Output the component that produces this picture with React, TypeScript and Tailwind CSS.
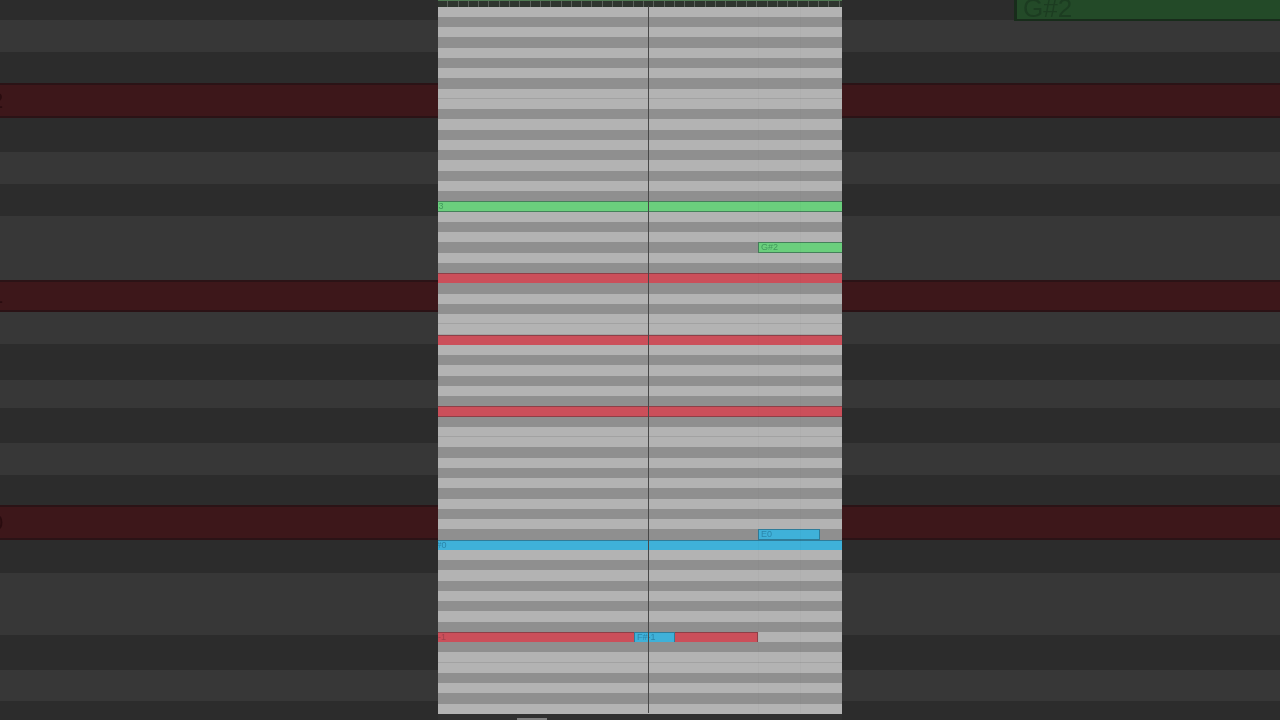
type Band = { h: number; kind: 'dark' | 'light' | 'red'; label?: string };

const bands: Band[] = [
  { h: 20, kind: 'dark' },
  { h: 32, kind: 'light' },
  { h: 31, kind: 'dark' },
  { h: 35, kind: 'red', label: '2' },
  { h: 34, kind: 'dark' },
  { h: 32, kind: 'light' },
  { h: 32, kind: 'dark' },
  { h: 32, kind: 'light' },
  { h: 32, kind: 'light' },
  { h: 32, kind: 'red', label: '1' },
  { h: 32, kind: 'light' },
  { h: 36, kind: 'dark' },
  { h: 28, kind: 'light' },
  { h: 35, kind: 'dark' },
  { h: 32, kind: 'light' },
  { h: 30, kind: 'dark' },
  { h: 35, kind: 'red', label: '0' },
  { h: 33, kind: 'dark' },
  { h: 32, kind: 'light' },
  { h: 30, kind: 'light' },
  { h: 35, kind: 'dark' },
  { h: 31, kind: 'light' },
  { h: 19, kind: 'dark' },
];

// piano roll rows top to bottom, l = white key, d = black key
const rows = [
  'l', 'd', 'l', 'd', 'l', 'd', 'l', 'd', 'l', 'l',
  'd', 'l', 'd', 'l', 'd', 'l', 'd', 'l', 'd', 'l',
  'l', 'd', 'l', 'd', 'l', 'd', 'l', 'd', 'l', 'd',
  'l', 'l', 'l', 'l', 'd', 'l', 'd', 'l', 'd', 'l',
  'd', 'l', 'l', 'd', 'l', 'd', 'l', 'd', 'l', 'd',
  'l', 'd', 'l', 'l', 'd', 'l', 'd', 'l', 'd', 'l',
  'd', 'l', 'd', 'l', 'l', 'd', 'l', 'd', 'l',
];

type Note = { w: number; color: 'green' | 'red' | 'blue'; label?: string; clip?: number; pad?: number; edges?: string };

const notes: Record<number, Note[]> = {
  19: [{ w: 404, color: 'green', label: 'C3', clip: 6 }],
  23: [{ pad: 320, w: 84, color: 'green', label: 'G#2', edges: 'border-l' }],
  26: [{ w: 404, color: 'red' }],
  32: [{ w: 404, color: 'red' }],
  39: [{ w: 404, color: 'red' }],
  51: [{ pad: 320, w: 62, color: 'blue', label: 'E0', edges: 'border-x' }],
  52: [{ w: 404, color: 'blue', label: 'F#0', clip: 7 }],
  61: [
    { w: 196, color: 'red', label: 'G-1', clip: 7 },
    { w: 41, color: 'blue', label: 'F#-1', edges: 'border-x' },
    { w: 83, color: 'red', edges: 'border-r' },
  ],
};

const noteClass = {
  green: 'bg-[#6bcf7d] border-[#45805a] text-[#419a5c]',
  red: 'bg-[#cb4f5a] border-[#8e3f47] text-[#a0434d]',
  blue: 'bg-[#3fb1d9] border-[#2f7c99] text-[#2b86ab]',
};

function SidePanel({ greenNote, labels }: { greenNote?: boolean; labels?: boolean }) {
  return (
    <div className="relative w-[438px] h-full flex flex-col overflow-hidden shrink-0">
      {bands.map((b, i) => (
        <div
          key={i}
          style={{ height: b.h }}
          className={
            b.kind === 'red'
              ? 'shrink-0 flex items-center bg-[#3d171a] border-y-2 border-[#2b1316] overflow-hidden'
              : b.kind === 'light'
                ? 'shrink-0 bg-[#373737]'
                : 'shrink-0 bg-[#2c2c2c]'
          }
        >
          {b.label && labels && (
            <span className="-ml-[9px] text-[22px] leading-none text-[#2a0c0f]">{b.label}</span>
          )}
        </div>
      ))}
      {greenNote && (
        <div className="absolute top-0 left-[172px] right-0 h-[21px] bg-[#234a28] border-l-[3px] border-b-[2px] border-[#182c1b] overflow-hidden">
          <span className="block -mt-[7px] ml-[6px] text-[26px] leading-[30px] text-[#1c3c21]">G#2</span>
        </div>
      )}
    </div>
  );
}

function NoteBar({ note }: { note: Note }) {
  return (
    <div
      style={{ width: note.w, marginLeft: note.pad ?? 0 }}
      className={`h-[11px] shrink-0 overflow-hidden border-y ${noteClass[note.color]} ${note.edges ?? ''}`}
    >
      {note.label && (
        <span
          style={{ marginLeft: note.clip ? -note.clip : 2 }}
          className="block text-[9px] leading-[9px] whitespace-nowrap"
        >
          {note.label}
        </span>
      )}
    </div>
  );
}

function PianoRoll() {
  const ticks = Array.from({ length: 39 }, (_, i) => i);
  return (
    <div className="relative w-[404px] h-full shrink-0 flex flex-col bg-[#2e2e2e]">
      <div className="h-[6.5px] shrink-0 flex border-t border-[#4f7a52] bg-[#2f352f]">
        {ticks.map((t) => (
          <div key={t} className="w-[10.3px] shrink-0 border-r border-[#5c625c]" />
        ))}
      </div>
      {rows.map((r, i) => (
        <div
          key={i}
          className={`h-[10.25px] shrink-0 flex ${r === 'l' ? 'bg-[#b3b3b3]' : 'bg-[#8f8f8f]'} ${r === 'l' && rows[i + 1] === 'l' ? 'border-b border-[#a2a2a2]' : ''}`}
        >
          {(notes[i] ?? []).map((n, j) => (
            <NoteBar key={j} note={n} />
          ))}
        </div>
      ))}
      <div className="flex-1 bg-[#303030] pl-[79px] flex items-end">
        <div className="w-[30px] h-[2px] bg-[#808080]" />
      </div>
      <div className="absolute top-[6px] bottom-[7px] left-[320px] w-px bg-black/[0.02]" />
      <div className="absolute top-[6px] bottom-[7px] left-[362px] w-px bg-black/[0.02]" />
      <div className="absolute top-[6px] bottom-[7px] left-[210px] w-px bg-[#474747]" />
    </div>
  );
}

export default function App() {
  return (
    <div className="w-[1280px] h-[720px] overflow-hidden bg-[#2c2c2c]">
      <div
        className="w-[1280px] h-[720px] flex blur-[0.6px]"
        style={{ fontFamily: '"Liberation Sans", Arial, sans-serif' }}
      >
        <SidePanel labels />
        <PianoRoll />
        <SidePanel greenNote />
      </div>
    </div>
  );
}
